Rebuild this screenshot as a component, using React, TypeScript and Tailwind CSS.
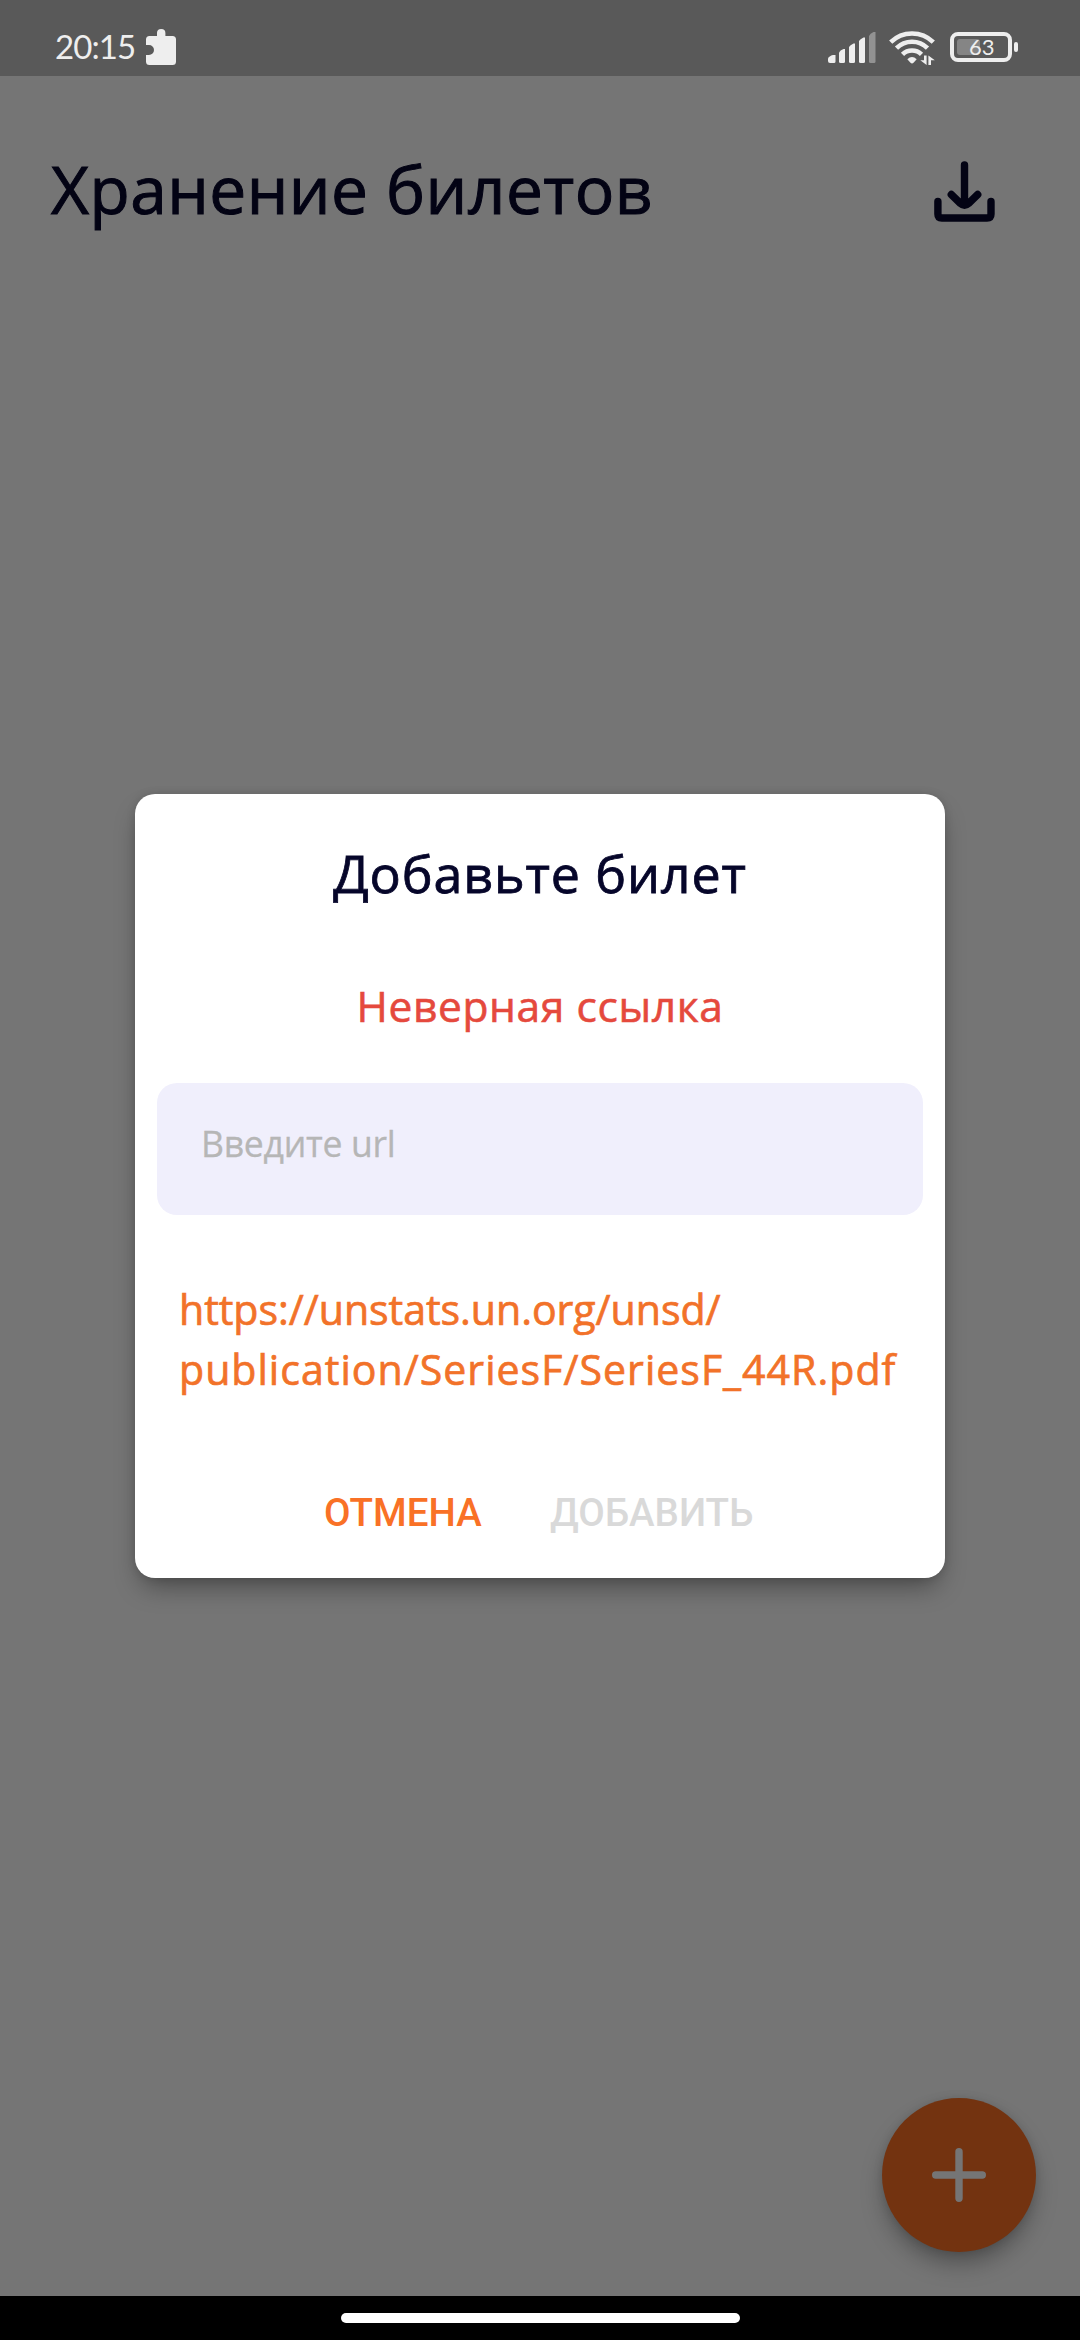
function StatusBar() {
  return (
    <header className="flex h-[76px] shrink-0 items-start justify-between bg-[#595959] pr-[62px] pl-[55px] text-[#eeeeee]">
      <div className="flex items-start gap-[11px]">
        <span className="mt-[26px] w-[80px] whitespace-nowrap font-['Lato',sans-serif] text-[33px] leading-10 tracking-[-0.9px]">20:15</span>
        <svg className="mt-[29px]" width="30" height="36" viewBox="0 0 30 36" fill="currentColor">
          <path d="M3.5 7H11V4a4.2 4 0 0 1 8.4 0v3h7.1A3.5 3.5 0 0 1 30 10.500v22a3.500 3.500 0 0 1-3.500 3.500h-23A3.500 3.500 0 0 1 0 32.500V26h3a5 5 0 0 0 0-10H0v-5.500A3.500 3.500 0 0 1 3.500 7z" />
        </svg>
      </div>
      <div className="flex items-start">
        <svg className="mt-[32px]" width="48" height="31" viewBox="0 0 48 31" fill="currentColor">
          <path d="M0 29V26.500Q1 24 5 23H7.500V29.500Q7.500 31 6 31H2Q0 31 0 29z" />
          <path d="M11 29.500V20.500Q12 18 15.500 17H17V29.500Q17 31 15.500 31H12.500Q11 31 11 29.500z" />
          <path d="M21 29.500V15Q22 13 25.500 11.500H27V29.500Q27 31 25.500 31H22.500Q21 31 21 29.500z" />
          <path d="M31 29.500V9Q32 7 35.500 5.500H37V29.500Q37 31 35.500 31H32.500Q31 31 31 29.500z" />
          <path d="M41 29.500V4Q42 1.500 45.500 0H47.500V29.500Q47.500 31 46 31H42.500Q41 31 41 29.500z" fill="#929292" />
        </svg>
        <svg className="mt-[30px] ml-[13px]" width="46" height="36" viewBox="0 0 46 36" fill="none" stroke="currentColor" strokeWidth="4.600">
          <path d="M1.700 12.200A30.500 30.500 0 0 1 44.300 12.200" />
          <path d="M7.500 18.200A22 22 0 0 1 38.500 18.200" />
          <path d="M13.500 24.300A13.700 13.700 0 0 1 32.500 24.300" />
          <path d="M18.300 29.200Q23 24.800 27.700 29.200L24.500 32.800Q23 34.200 21.500 32.800z" fill="currentColor" stroke="none" />
          <path d="M35 25.500h2.600V35L31.300 30.300H35zM39.400 35V25.500L45.800 30.200H42V35z" fill="currentColor" stroke="none" />
        </svg>
        <div className="mt-[32px] ml-[15px] flex items-center gap-[2px]">
          <div className="relative h-[30px] w-[62px] rounded-[8px] border-4 border-[#eeeeee]">
            <div className="ml-[3px] mt-[3px] h-4 w-[23px] rounded-[3px] bg-[#858585]" />
            <span className="absolute top-[-1px] left-[15px] font-['Lato',sans-serif] text-[22px] leading-6">63</span>
          </div>
          <div className="h-[10px] w-[4px] rounded-full bg-[#eeeeee]" />
        </div>
      </div>
    </header>
  );
}

function TicketDialog() {
  return (
    <section className="flex h-[784px] w-[810px] flex-col rounded-[20px] bg-white font-['Open_Sans',sans-serif] shadow-[0_14px_26px_-6px_rgba(0,0,0,0.38),0_0_10px_rgba(0,0,0,0.12)]">
      <h2 className="mt-[48px] text-center text-[52px] leading-[62px] tracking-[0.85px] text-[#06062a] [-webkit-text-stroke:0.8px]">Добавьте билет</h2>
      <p className="mt-[76px] text-center text-[42.5px] leading-[52px] tracking-[0.6px] text-[#e5493d] [-webkit-text-stroke:0.6px]">Неверная ссылка</p>
      <div className="mx-[22px] mt-[51px] h-[132px] rounded-[20px] bg-[#f0effc] pt-[38px] pl-[44px] text-[35.6px] leading-[44px] tracking-[-0.3px] text-[#b6b6b6] [-webkit-text-stroke:0.3px]">
        Введите url
      </div>
      <p className="mt-[64px] pl-[44px] text-[41.1px] leading-[60px] whitespace-nowrap text-[#f27229] [-webkit-text-stroke:0.7px]">
        <span className="block tracking-[-0.05px]">https://unstats.un.org/unsd/</span>
        <span className="block tracking-[1px]">publication/SeriesF/SeriesF_44R.pdf</span>
      </p>
      <div className="mt-[91px] flex pl-[189px] font-['Roboto',sans-serif] text-[38.5px] leading-[46px] font-medium">
        <button className="w-[226px] text-left text-[#f97126]">ОТМЕНА</button>
        <button className="text-[#d9d9d9]">ДОБАВИТЬ</button>
      </div>
    </section>
  );
}

export default function App() {
  return (
    <div className="flex h-[2340px] w-[1080px] flex-col overflow-hidden bg-black">
      <StatusBar />
      <main className="relative flex flex-1 flex-col justify-between bg-[#757575]">
        <div className="flex items-start justify-between pt-[72px] pr-[85px] pl-[51px]">
          <h1 className="mt-px font-['Open_Sans',sans-serif] text-[65.8px] leading-[80px] tracking-[0.45px] text-[#030314] [-webkit-text-stroke:1px]">Хранение билетов</h1>
          <svg className="mt-[13px]" width="61" height="61" viewBox="0 0 61 61" fill="none" stroke="#030314" strokeWidth="7.400" strokeLinecap="round" strokeLinejoin="round">
            <path d="M30.500 3.900V43M17.300 33.500L26.500 42.500Q30.500 46 34.500 42.500L43.700 33.500M3.900 40.500V53Q3.900 57 7.900 57H53Q57 57 57 53V40.500" />
          </svg>
        </div>
        <div className="mr-11 mb-11 flex size-[154px] items-center justify-center self-end rounded-full bg-[#733310] shadow-[0_14px_24px_-4px_rgba(0,0,0,0.35),0_0_10px_rgba(0,0,0,0.1)]">
          <svg width="54" height="54" viewBox="0 0 54 54" fill="none" stroke="#757575" strokeWidth="7.400" strokeLinecap="round">
            <path d="M27 3.700V50.300M3.700 27H50.300" />
          </svg>
        </div>
        <div className="absolute inset-0 flex items-center justify-center">
          <TicketDialog />
        </div>
      </main>
      <footer className="flex h-11 shrink-0 justify-center pt-[17px]">
        <div className="h-[10px] w-[399px] rounded-full bg-white" />
      </footer>
    </div>
  );
}
